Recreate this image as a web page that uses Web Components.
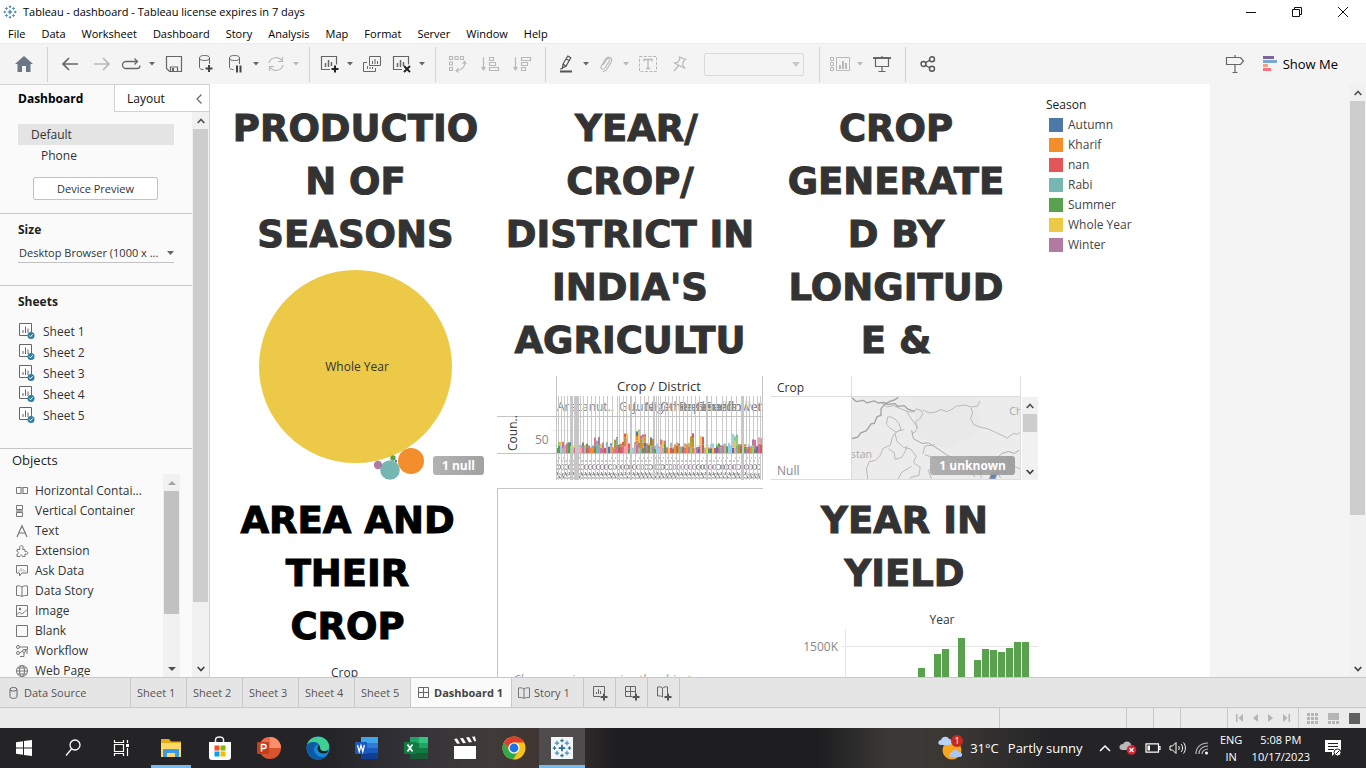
<!DOCTYPE html>
<html lang="en">
<head>
<meta charset="utf-8">
<title>Tableau - dashboard</title>
<style>
html,body{height:100%}
body{margin:0;font:11px/16px "Open Sans","Noto Sans",sans-serif;color:#111;overflow:hidden}
</style>
</head>
<body>
<tableau-app></tableau-app>
<script>
function define(name, css, html, setup){
  customElements.define(name, class extends HTMLElement{
    connectedCallback(){
      if(this.shadowRoot) return;
      const root=this.attachShadow({mode:'open'});
      const t=document.createElement('template');
      t.innerHTML='<style>*{box-sizing:border-box}button,select{font:inherit;color:inherit;margin:0}'+css+'</style>'+(typeof html==='function'?html(this):html);
      root.append(t.content.cloneNode(true));
      if(setup) setup(this,root);
    }
  });
}

/* ---------- icons: [width, height, markup] ---------- */
const mark=(s,c)=>{
  const p=(x,y,r,col)=>`<path d="M${x-r} ${y}H${x+r}M${x} ${y-r}V${y+r}" stroke="${col}" stroke-width="${r>2?1.4:1}"/>`;
  return [s,s,`<g transform="scale(${s/16})">${p(8,8,2.6,c||'#1f77a8')}${p(4,4,1.8,'#4a90b8')}${p(12,4,1.8,'#4a90b8')}${p(4,12,1.8,'#4a90b8')}${p(12,12,1.8,'#4a90b8')}${p(8,2,1.4,'#2f6f94')}${p(8,14,1.4,'#2f6f94')}${p(2,8,1.4,'#2f6f94')}${p(14,8,1.4,'#2f6f94')}</g>`];
};
const g='#666', l='#b8b8b8';
const plus=(x,y,c='#444')=>`<path d="M${x-3.5} ${y}h7M${x} ${y-3.5}v7" stroke="${c}" stroke-width="2" fill="none"/>`;
const ICONS={
 logo:mark(14),
 min:[10,10,'<path d="M0 5.5h10" stroke="#111"/>'],
 restore:[10,10,'<path d="M.5 2.5h7v7h-7zM2.5 2.5v-2h7v7h-2" stroke="#111" fill="none"/>'],
 close:[10,10,'<path d="M0 0l10 10M10 0L0 10" stroke="#111"/>'],
 home:[18,16,'<path d="M9 0L18 8H15.500V16H11V10H7V16H2.500V8H0z" fill="#6b7785"/>'],
 back:[16,14,`<path d="M16 7H1M7 1L1 7l6 6" stroke="${g}" stroke-width="1.700" fill="none"/>`],
 fwd:[16,14,`<path d="M0 7h15M9 1l6 6-6 6" stroke="${l}" stroke-width="1.700" fill="none"/>`],
 redo:[20,12,`<path d="M6 3.500H4a3 3 0 0 0 0 7h11a3 3 0 0 0 3-3M6 3.500h9M12.500 .5l3 3-3 3" stroke="${g}" stroke-width="1.300" fill="none"/>`],
 save:[16,16,`<path d="M.5 .5h15v15H3.500l-3-3zM4.500 15v-4h7v4" stroke="${g}" fill="none" stroke-width="1.200"/><path d="M6 12h2v3H6z" fill="${g}"/>`],
 dbadd:[16,18,`<path d="M1.500 3v9.500c0 1 1.500 2 4 2.200M11.500 3v6" stroke="${g}" fill="none"/><ellipse cx="6.500" cy="3" rx="5" ry="2.500" stroke="${g}" fill="none"/>${plus(11,13.5)}`],
 dbpause:[16,18,`<path d="M1.500 3v9.500c0 1 1.500 2 4 2.200M11.500 3v6" stroke="${g}" fill="none"/><ellipse cx="6.500" cy="3" rx="5" ry="2.500" stroke="${g}" fill="none"/><path d="M8 10.500h2v7H8zM11.500 10.500h2v7h-2z" fill="#444"/>`],
 refresh:[18,16,`<path d="M2 7a7 6.500 0 0 1 13-2M16 9a7 6.500 0 0 1-13 2M15.500 1v4.500H11M2.500 15v-4.500H7" stroke="${l}" stroke-width="1.200" fill="none"/>`],
 sheetadd:[20,18,`<path d="M10 14.500H1.500V1.500h15v8" stroke="${g}" fill="none" stroke-width="1.200"/><path d="M5.500 12V8M8.500 12V5M11.500 11V7" stroke="${g}" stroke-width="1.500"/>${plus(15,14,'#222')}`],
 dup:[18,16,`<path d="M6.500 .5h11v9h-11zM4 6.500H.5v9h12V12" stroke="${g}" fill="none"/><path d="M9.500 8V5M12 8V3M14.500 8V5M4.500 13v-3M7 13v-2M9.500 13v-2" stroke="${g}"/>`],
 clear:[20,18,`<path d="M10 14.500H1.500V1.500h15v8" stroke="${g}" fill="none" stroke-width="1.200"/><path d="M5.500 12V8M8.500 12V5M11.500 11V7" stroke="${g}" stroke-width="1.500"/><path d="M12 11l6 6M18 11l-6 6" stroke="#222" stroke-width="2"/>`],
 swap:[18,18,`<path d="M.5 1.500h3v3h-3zM6 1.500h3v3H6zM11.500 1.500h3v3h-3zM.5 7h3v3h-3zM.5 12.500h3v3h-3zM15.500 7c1 4-2 8-8 8.500M13.500 9l2-2.500L17.500 9M9.500 13.500L7 15.500l2.500 2" stroke="${l}" fill="none" stroke-width="1.100"/>`],
 asc:[18,16,`<path d="M2.500 1v12M8.500 1.500h4v3h-4zM8.500 6.500h6v3h-6zM8.500 11.500h9v3h-9z" stroke="${l}" fill="none" stroke-width="1.200"/><path d="M0 11h5l-2.500 4z" fill="${l}"/>`],
 desc:[18,16,`<path d="M2.500 1v12M8.500 1.500h9v3h-9zM8.500 6.500h6v3h-6zM8.500 11.500h4v3h-4z" stroke="${l}" fill="none" stroke-width="1.200"/><path d="M0 11h5l-2.500 4z" fill="${l}"/>`],
 pen:[14,18,'<path d="M4 9L8.800 1l3 1.800L7 11.200l-3.500 1.600zM4 9l3 2.200M7.300 4l2.800 1.600M1 14l3-.5" stroke="#555" stroke-width="1.200" fill="none"/><path d="M1 15.500h12v2H1z" fill="#555"/>'],
 clip:[14,16,`<path d="M4 9l4-6c1-1.500 3.500 0 2.500 1.800L6 12c-2 2.500-5 .5-3.700-2L7 2.500C9-.5 14 2 12.500 5.500L8 13c-1.500 2.500-4 2.500-4 2" stroke="${l}" stroke-width="1.100" fill="none"/>`],
 textbox:[18,16,`<path d="M.5 .5h17v15H.5z" stroke="${l}" stroke-dasharray="3 1.500" fill="none"/><path d="M5 5.500v-2h8v2M9 3.500v9M7 12.500h4" stroke="${l}" stroke-width="1.300" fill="none"/>`],
 pin:[14,16,`<path d="M6.500 1l6 2.500-2 1.500-.8 4 1.800 3-5-2.200L1.500 7l3.300-.8L6.800 3zM5.500 9.500L1 15" stroke="${l}" stroke-width="1.200" fill="none"/>`],
 cards:[20,14,`<path d="M.5 .5h3v3h-3zM.5 5.500h3v3h-3zM.5 10.500h3v3h-3zM6.500 .5h13v13h-13z" stroke="${l}" fill="none"/><path d="M9 8h2v4H9zM12 4h2v8h-2zM15 6h2v6h-2z" fill="${l}"/>`],
 present:[18,16,`<path d="M0 2h18" stroke="${g}" stroke-width="2"/><path d="M2.500 2v8.500h13V2M9 0v2M9 10.500v5M5.500 15.500h7" stroke="${g}" stroke-width="1.200" fill="none"/>`],
 share:[16,16,'<path d="M5 7l5-3M5 9l5 3" stroke="#555" stroke-width="1.400"/><g stroke="#555" stroke-width="1.400" fill="none"><circle cx="3.500" cy="8" r="2.500"/><circle cx="12" cy="3.200" r="2.500"/><circle cx="12" cy="12.800" r="2.500"/></g>'],
 guide:[18,18,`<path d="M9 0v2.500M.5 2.500h14L17.500 6l-3 3.500H.5zM9 9.500v8M6.500 17.500h5" stroke="${g}" stroke-width="1.200" fill="none"/>`],
 showme:[14,16,'<path d="M0 0h11v3H0z" fill="#7b669b"/><path d="M0 4h14v3H0z" fill="#7ba6cf"/><path d="M0 8h5v3H0z" fill="#f2a477"/><path d="M0 12h8v3H0z" fill="#fb6f83"/>'],
 caret:[6,4,'<path d="M0 0h6L3 3.500z" fill="#666"/>'],
 caretl:[6,4,'<path d="M0 0h6L3 3.500z" fill="#b8b8b8"/>'],
 bigcaret:[8,5,'<path d="M0 0h8L4 5z" fill="#c8c8c8"/>'],
 selcaret:[7,4,'<path d="M0 0h7L3.500 4z" fill="#666"/>'],
 left:[6,10,'<path d="M5.500 .5L1 5l4.500 4.500" stroke="#666" stroke-width="1.200" fill="none"/>'],
 up:[8,6,'<path d="M.7 5L4 1.500 7.300 5" stroke="#555" stroke-width="1.800" fill="none"/>'],
 down:[8,6,'<path d="M.7 1L4 4.500 7.300 1" stroke="#444" stroke-width="1.800" fill="none"/>'],
 triup:[8,4,'<path d="M0 4h8L4 0z" fill="#a3a3a3"/>'],
 tridown:[8,4,'<path d="M0 0h8L4 4z" fill="#505050"/>'],
 sheet:[17,17,'<path d="M1.500 .5h12v12h-12z" stroke="#666" fill="#fff"/><path d="M5 10V7M7.500 10V3.500M10 10V5.500" stroke="#666"/><circle cx="13" cy="12.500" r="3.500" fill="#2e7fa5"/><path d="M11.300 12.500l1.200 1.300 2.200-2.500" stroke="#fff" fill="none"/>'],
 horiz:[12,12,'<path d="M.5 2.500h4.500v6H.5zM7 2.500h4.500v6H7z" stroke="#777" fill="none"/><path d="M5 2h2v7H5z" fill="#aaa"/>'],
 vert:[12,12,'<path d="M.5 .5h6v4h-6zM.5 7.500h6v4h-6z" stroke="#777" fill="none"/><path d="M0 5h7v2H0z" fill="#aaa"/>'],
 text:[12,12,'<path d="M1 12L6 .8 11 12M2.800 8h6.400" stroke="#777" stroke-width="1.200" fill="none"/>'],
 ext:[12,12,'<path d="M1 4.500h3c-1-2 0-4 1.500-4s2 2 1.200 4H9v2.200c2-.6 2.800.2 2.800 1.300S11 9.500 9 9v2.500H6.500c0-2-2.500-2-2.500 0H1V9c2 0 2-2.500 0-2.500z" stroke="#777" fill="none"/>'],
 ask:[12,12,'<path d="M.5 .5h11v7.500H6l-2.500 3v-3h-3z" stroke="#777" fill="none"/><path d="M3 6.500V5M5 6.500V3M7 6.500V4M9 6.500V5" stroke="#aaa"/>'],
 story:[12,12,'<path d="M6 2C4.500 .8 2.500 .6 .5 1v9.500c2-.2 4 0 5.500 1 1.500-1 3.500-1.200 5.500-1V1C9.500 .6 7.500 .8 6 2zM6 2v9.500" stroke="#777" fill="none"/>'],
 image:[12,12,'<path d="M.5 .5h11v11H.5zM.5 10l3-3 2 2 2.500-1.500 3-3" stroke="#777" fill="none"/><circle cx="4" cy="4" r="1.200" fill="#777"/>'],
 blank:[12,12,'<path d="M.5 .5h11v11H.5z" stroke="#777" fill="none"/>'],
 flow:[12,12,'<g stroke="#777" fill="none"><circle cx="2" cy="2" r="1.500"/><circle cx="2" cy="8" r="1.500"/><circle cx="8" cy="6" r="1.500"/><path d="M4 2h7.500v2.500H9M3.500 8L6.500 6M8 8v3.500H4M10 8h2M9.500 6H12"/></g>'],
 web:[12,12,'<g stroke="#777" fill="none"><circle cx="6" cy="6" r="5.500"/><ellipse cx="6" cy="6" rx="2.500" ry="5.500"/><path d="M.5 6h11M1.500 3h9M1.500 9h9"/></g>'],
 db:[9,12,'<path d="M1 2.500v7c0 2.500 7 2.500 7 0v-7" stroke="#666" fill="none"/><ellipse cx="4.500" cy="2.300" rx="3.500" ry="1.800" stroke="#666" fill="none"/>'],
 dash:[12,12,'<path d="M.5 .5h10v10H.5zM5.500 .5v10M.5 5.500h10" stroke="#666" fill="none"/>'],
 tabsheet:[16,16,`<path d="M8 11.500H1.500v-10h11v7" stroke="#666" fill="none"/><path d="M4.500 9V7M6.500 9V4M8.500 9V6" stroke="#666"/>${plus(12,12,'#555')}`],
 tabdash:[16,16,`<path d="M8 11.500H1.500v-10h10v7M6.500 1.500v10M1.500 6.500h10" stroke="#666" fill="none"/>${plus(12,12,'#555')}`],
 tabstory:[16,16,`<path d="M6.500 3C5 1.800 3 1.600 1.500 2v9c2-.3 4 0 5 1V3c1.500-1.200 3.500-1.400 5-1v6" stroke="#666" fill="none"/>${plus(12,12,'#555')}`],
 first:[7,8,'<path d="M0 0h1.500v8H0zM7 0v8L2.500 4z" fill="#b5b5b5"/>'],
 prev:[5,8,'<path d="M5 0v8L0 4z" fill="#b5b5b5"/>'],
 next:[5,8,'<path d="M0 0v8l5-4z" fill="#b5b5b5"/>'],
 last:[7,8,'<path d="M5.500 0H7v8H5.500zM0 0v8l4.500-4z" fill="#b5b5b5"/>'],
 grid9:[11,11,'<path d="M0 0h3v3H0zM4 0h3v3H4zM8 0h3v3H8zM0 4h3v3H0zM4 4h3v3H4zM8 4h3v3H8zM0 8h3v3H0zM4 8h3v3H4zM8 8h3v3H8z" fill="#b5b5b5"/>'],
 film:[11,11,'<path d="M0 0h11v7H0zM0 8h3v3H0zM4 8h3v3H4zM8 8h3v3H8z" fill="#b5b5b5"/>'],
 full:[11,11,'<path d="M0 0h11v11H0z" fill="#606060"/>'],
 win:[16,16,'<path d="M0 2.200L7 1.200V7.500H0zM8 1L16 0V7.500H8zM0 8.500h7v6.300L0 13.800zM8 8.500h8V16L8 15z" fill="#fff"/>'],
 search:[16,18,'<circle cx="10" cy="6" r="5" stroke="#fff" stroke-width="1.300" fill="none"/><path d="M6.500 10L1 16.500" stroke="#fff" stroke-width="1.300"/>'],
 task:[18,16,'<path d="M1.500 4.500h9v7h-9zM1.500 0v2.500h9V0M1.500 16v-2.500h9V16M14.500 0v3M14.500 8v8" stroke="#fff" fill="none" stroke-width="1.200"/><path d="M13 4h3v3h-3z" fill="#fff"/>'],
 folder:[22,20,'<path d="M1 1h8l2 2.500h10V19H1z" fill="#e8a917"/><path d="M1 5h20v14H1z" fill="#ffd968"/><path d="M3 19v-8h16v8h-4v-4H7v4z" fill="#3c9be4"/>'],
 store:[24,24,'<path d="M7.500 7V4c0-4 8-4 8 0v3" stroke="#eee" stroke-width="1.500" fill="none"/><path d="M1 6h22v15a3 3 0 0 1-3 3H4a3 3 0 0 1-3-3z" fill="#fff"/><path d="M6.500 9.500h5v5h-5z" fill="#f25022"/><path d="M12.500 9.500h5v5h-5z" fill="#7fba00"/><path d="M6.500 15.500h5v5h-5z" fill="#00a4ef"/><path d="M12.500 15.500h5v5h-5z" fill="#ffb900"/>'],
 ppt:[24,24,'<circle cx="13" cy="12" r="11" fill="#d9532c"/><path d="M13 1a11 11 0 0 1 11 11H13z" fill="#ff8f6b"/><path d="M2 12a11 11 0 0 1 11-11v11z" fill="#ed6c47"/><rect y="6" width="12" height="12" rx="1" fill="#c43e1c"/><path d="M4.500 15.500V8.500h2.500a2 2 0 0 1 0 4H4.500" stroke="#fff" stroke-width="1.600" fill="none"/>'],
 edge:[24,24,'<circle cx="12" cy="12" r="11.500" fill="#1389d8"/><path d="M1 9C3 0 16-2 21 5c4 5 2 11-4 10-4 0-2-2-3-5C12 5 4 5 1 9z" fill="#3fcf8e"/><path d="M1 9c3-4 10-4 12 0-5-1-6 5-4 8 3 5 9 5 12 2-3 6-14 7-19-2-1-2-1.500-5-1-8z" fill="#0c59a4"/><path d="M13 9c-2 2-2 5 0 7 3 2 6 2 9 0 1-2-1-1-5-1-4-1-2-3-4-6z" fill="#202022"/>'],
 word:[24,24,'<path d="M6 1h17v6H6z" fill="#41a5ee"/><path d="M6 7h17v5H6z" fill="#2b7cd3"/><path d="M6 12h17v5H6z" fill="#185abd"/><path d="M6 17h17v6H6z" fill="#103f91"/><rect y="6" width="12" height="12" rx="1" fill="#185abd"/><path d="M2.500 9l1.700 6.500L6 9.500l1.800 6L9.500 9" stroke="#fff" stroke-width="1.300" fill="none"/>'],
 excel:[24,24,'<path d="M6 1h9v6H6z" fill="#21a366"/><path d="M15 1h9v6h-9z" fill="#33c481"/><path d="M6 7h9v10H6z" fill="#107c41"/><path d="M15 7h9v5h-9z" fill="#21a366"/><path d="M15 12h9v5h-9z" fill="#107c41"/><path d="M6 17h18v6H6z" fill="#185c37"/><rect y="6" width="12" height="12" rx="1" fill="#107c41"/><path d="M3.500 8.500l5 7M8.500 8.500l-5 7" stroke="#fff" stroke-width="1.700"/>'],
 clap:[24,24,'<path d="M1 10h22v13H1z" fill="#fff"/><path d="M1 3l3-.5 3 5-3 .3zM7 2.200l3-.3 3 5-3 .3zM13 1.500l3-.4 3 5-3 .3zM19 .8l3-.3 1 4.500-1.500.5z" fill="#fff"/>'],
 chrome:[24,24,'<circle cx="12" cy="12" r="11.500" fill="#fbc116"/><path d="M2 6.300A11.500 11.500 0 0 1 22 6.500H12a5.500 5.500 0 0 0-5 8z" fill="#e33b2e"/><path d="M2 6.300A11.500 11.500 0 0 0 11 23.500L16.500 15a5.500 5.500 0 0 1-9.500-.5z" fill="#2da94f"/><circle cx="12" cy="12" r="5.600" fill="#fff"/><circle cx="12" cy="12" r="4.400" fill="#1a73e8"/>'],
 tableau:[22,22,`<path d="M0 0h22v22H0z" fill="#f4f7fa"/><g transform="translate(1 1)">${mark(20,'#2b6b95')[2]}</g>`],
 weather:[26,24,'<circle cx="14" cy="14" r="9.500" fill="#f8a51d"/><path d="M3 9c-4 0-3-5 0-5 1-4 7-4 8-1 4 0 4 6 0 6z" fill="#b9d2f4"/><path d="M14 21c-4 0-3-4 0-5 1-3 6-3 7 0 4 0 4 5 1 5z" fill="#a9c8f2"/>'],
 chev:[12,8,'<path d="M1 7l5-5 5 5" stroke="#fff" stroke-width="1.500" fill="none"/>'],
 cloud:[18,14,'<path d="M3 9c-4-1-3-6 1-6 2-4 8-3 8 1 3 0 4 4 1 5z" fill="#b9b9b9"/><circle cx="12.500" cy="9" r="4.800" fill="#d9232e"/><path d="M10.500 7l4 4M14.500 7l-4 4" stroke="#fff" stroke-width="1.300"/>'],
 batt:[16,10,'<path d="M1 .8h12.500v8.400H1zM13.500 3.500H15v3h-1.500" stroke="#fff" stroke-width="1.200" fill="none"/><path d="M2.500 2.500H5v5H2.500z" fill="#fff"/>'],
 vol:[18,14,'<path d="M1 5h2.500L7 1.500v11L3.500 9H1zM9.500 5c1 1 1 3 0 4M12 3c2 2 2 6 0 8M14.500 1.500c2.500 3 2.500 8 0 11" stroke="#fff" fill="none"/>'],
 wifi:[14,13,'<path d="M1 12C1 5 6 1 13 1M4 12C4 7 8 4 13 4M7 12c0-3 3-5 6-5" stroke="#bbb" fill="none" stroke-width="1.200"/><circle cx="11.500" cy="11" r="1.500" fill="#fff"/>'],
 note:[18,17,'<path d="M1 0h16v12h-5l-4 4v-4H1z" fill="#fff"/><path d="M4 3.500h10M4 6.500h10M4 9.500h6" stroke="#222"/><circle cx="13.500" cy="12.500" r="3.500" fill="#fff" stroke="#222"/><path d="M11.500 14.500l4-4" stroke="#222"/>'],
};
define('tb-icon',':host{display:block;flex:none;line-height:0}svg{display:block;overflow:visible}',el=>{
  const [w,h,m]=ICONS[el.getAttribute('name')];
  return `<svg width="${w}" height="${h}" viewBox="0 0 ${w} ${h}" fill="none" aria-hidden="true">${m}</svg>`;
});

/* ---------- scroll bar: thumb length as a share of its track ---------- */
define('tb-scrollbar',`:host{display:flex;flex-direction:column;flex:none;width:17px;background:#f1f1f1}
.a{height:17px;display:grid;place-items:center;flex:none}.t{flex:1;padding:0 1px}.th{background:#cdcdcd}`,
el=>{const k=el.hasAttribute('tri');return `<div class="a"><tb-icon name="${k?'triup':'up'}"></tb-icon></div><div class="t"><div class="th" style="height:${el.getAttribute('thumb')};${k?'background:#c1c1c1':''}"></div></div><div class="a"><tb-icon name="${k?'tridown':'down'}"></tb-icon></div>`;});

/* ---------- window chrome ---------- */
define('title-bar',`:host{display:flex;align-items:center;height:23px;padding-left:3px;background:#fff;color:#000}
h1{font:inherit;margin:0 auto 0 6px}button{width:46px;height:20px;padding:0;border:0;background:none;display:grid;place-items:center}`,
`<tb-icon name="logo"></tb-icon><h1>Tableau - dashboard - Tableau license expires in 7 days</h1>
<button aria-label="Minimize"><tb-icon name="min"></tb-icon></button><button aria-label="Restore"><tb-icon name="restore"></tb-icon></button><button aria-label="Close"><tb-icon name="close"></tb-icon></button>`);

define('menu-bar',`:host{display:block;background:#fff}nav{display:flex;align-items:center;gap:16px;height:20px;padding:2px 0 0 8px}
button{border:0;padding:0;background:none;color:#000}`,
'<nav>'+['File','Data','Worksheet','Dashboard','Story','Analysis','Map','Format','Server','Window','Help'].map(t=>`<button>${t}</button>`).join('')+'</nav>');

define('tool-button',`:host{display:flex}button{border:0;background:none;padding:0;height:40px;display:grid;place-items:center;width:32px}
:host([menu]) button{width:28px}:host([menu]) button+button{width:12px}`,
el=>`<button aria-label="${el.getAttribute('label')}"><tb-icon name="${el.getAttribute('icon')}"></tb-icon></button>`+
 (el.hasAttribute('menu')?`<button aria-label="${el.getAttribute('label')} options"><tb-icon name="${el.getAttribute('menu')||'caret'}"></tb-icon></button>`:''));

const tool=(icon,label,menu)=>`<tool-button icon="${icon}" label="${label}"${menu!==undefined?` menu="${menu}"`:''}></tool-button>`;
define('tool-bar',`:host{display:flex;align-items:center;height:41px;padding:0 28px 0 8px;background:#f4f4f4;border-top:1px solid #ececec}
i{width:1px;height:35px;background:#d2d2d2;margin:0 6px 0 7px;flex:none}
.pick{position:relative;margin:0 8px;width:100px;height:23px}select{width:100%;height:100%;appearance:none;border:1px solid #d0d0d0;border-radius:2px;background:#f4f4f4}
.pick tb-icon{position:absolute;right:4px;top:9px;pointer-events:none}
.show{display:flex;align-items:center;gap:6px;border:0;background:none;padding:0;font-size:13px;color:#000;margin-left:12px}.sp{margin-left:auto}`,
tool('home','Start page')+'<i></i>'+tool('back','Undo')+tool('fwd','Redo')+tool('redo','Replay','caret')+tool('save','Save')+tool('dbadd','New data source')+tool('dbpause','Pause updates','caret')+tool('refresh','Refresh','caretl')+'<i></i>'+
tool('sheetadd','New worksheet','caret')+tool('dup','Duplicate')+tool('clear','Clear','caret')+'<i></i>'+tool('swap','Swap')+tool('asc','Sort ascending')+tool('desc','Sort descending')+'<i></i>'+
tool('pen','Highlight','caret')+tool('clip','Group','caretl')+tool('textbox','Labels')+tool('pin','Fix axes')+
'<div class="pick"><select aria-label="Fit" disabled></select><tb-icon name="bigcaret"></tb-icon></div><i></i>'+tool('cards','Cards','caretl')+tool('present','Presentation')+'<i></i>'+tool('share','Share')+
'<div class="sp"></div>'+tool('guide','Data guide')+'<button class="show"><tb-icon name="showme"></tb-icon>Show Me</button>');

/* ---------- side pane ---------- */
define('side-section',`:host{display:block;border-bottom:1px solid #c6c6c6;padding:8px 18px}h2{font:700 12px/16px "Open Sans",sans-serif;margin:0;color:#222}`,
el=>`${el.getAttribute('heading')?`<h2>${el.getAttribute('heading')}</h2>`:''}<slot></slot>`);
define('side-item',`:host{display:block}button{display:flex;align-items:center;width:100%;border:0;background:none;padding:0;color:#333;font-size:12px;height:var(--h,21px);text-align:left;white-space:nowrap;gap:var(--gap,8px)}`,
el=>`<button><tb-icon name="${el.getAttribute('icon')}"></tb-icon><slot></slot></button>`);
define('side-pane',`:host{display:flex;flex-direction:column;width:210px;flex:none;background:#fafafa;border-right:1px solid #d2d2d2;border-top:1px solid #d2d2d2;min-height:0}
.tabs{display:flex;height:27px;flex:none}.tabs button{border:0;background:none;font-size:12px;padding:0;text-align:left}
.on{font-weight:700!important;width:114px;padding-left:18px!important;color:#000}.lay{flex:1;display:flex;align-items:center;border-left:1px solid #d2d2d2;border-bottom:1px solid #d2d2d2;background:#fff;padding:1px 7px 0 12px}
.lay .t{margin-right:auto;color:#111}
.body{display:flex;flex:1;min-height:0}.col{flex:1;min-width:0;overflow:hidden;display:flex;flex-direction:column}
.dev{display:block;width:156px;height:21px;border:0;padding:0 0 0 13px;text-align:left;background:none;font-size:12px;color:#333}.dev.s{background:#e4e4e4}.dev.p{padding-left:23px}
.prev{display:block;width:125px;height:23px;border:1px solid #c2c2c2;border-radius:2px;background:#fff;color:#333;margin:11px 0 5px 15px;padding:0}
.pick{position:relative;width:156px;margin:5px 0 14px;border-bottom:1px solid #c2c2c2}select{display:block;width:100%;height:19px;appearance:none;border:0;background:none;color:#333;padding:0 0 0 1px}
.pick tb-icon{position:absolute;right:0;top:8px;pointer-events:none}
.sheets{margin:11px 0 14px}
h3{font:500 13px/17px "Open Sans",sans-serif;color:#222;margin:3px 0 5px 12px}
.obj{display:flex;flex:1;min-height:0}.list{--h:20px;--gap:7px;padding:7px 0 0 16px;overflow:hidden;width:163px}.sec1{padding-top:4px}`,
`<div class="tabs"><button class="on">Dashboard</button><div class="lay"><button class="t">Layout</button><button aria-label="Collapse"><tb-icon name="left"></tb-icon></button></div></div>
<div class="body"><div class="col">
<side-section><div class="sec1"><button class="dev s">Default</button><button class="dev p">Phone</button><button class="prev">Device Preview</button></div></side-section>
<side-section heading="Size"><div class="pick"><select aria-label="Size"><option>Desktop Browser (1000 x ...</option></select><tb-icon name="selcaret"></tb-icon></div></side-section>
<side-section heading="Sheets"><div class="sheets">${[1,2,3,4,5].map(n=>`<side-item icon="sheet">Sheet ${n}</side-item>`).join('')}</div></side-section>
<h3>Objects</h3><div class="obj"><div class="list">${[['horiz','Horizontal Contai...'],['vert','Vertical Container'],['text','Text'],['ext','Extension'],['ask','Ask Data'],['story','Data Story'],['image','Image'],['blank','Blank'],['flow','Workflow'],['web','Web Page']].map(([i,t])=>`<side-item icon="${i}">${t}</side-item>`).join('')}</div><tb-scrollbar tri thumb="73%"></tb-scrollbar></div>
</div><tb-scrollbar thumb="89%"></tb-scrollbar></div>`);

/* ---------- dashboard zones ---------- */
define('zone-title',`:host{display:block}h2{font:700 37px/53px "DejaVu Sans","Liberation Sans",sans-serif;-webkit-text-stroke:1px var(--title,#333);color:var(--title,#333);margin:0;text-align:center;white-space:nowrap}`,'<h2><slot></slot></h2>');
define('null-badge',`:host{display:block}button{border:0;border-radius:3px;background:linear-gradient(90deg,#aaaaaae6,#989898e6);color:#fff;font-weight:700;font-size:12px;height:19px;padding:0 9px;display:block}`,'<button><slot></slot></button>');

define('bubble-chart',`:host{display:block;position:relative}svg{display:block;margin:0 auto}text{font:12px "Open Sans",sans-serif;fill:#333}null-badge{position:absolute;right:5px;bottom:5px}`,
`<svg width="271" height="219"><g transform="translate(0 -1)"><circle cx="137.500" cy="106.500" r="96.500" fill="#edc948"/><circle cx="193" cy="201" r="13" fill="#f28e2b"/><circle cx="172" cy="210" r="9.800" fill="#76b7b2"/><circle cx="160" cy="205" r="4.200" fill="#b07aa1"/><circle cx="175" cy="198" r="2.700" fill="#59a14f"/><circle cx="178" cy="201" r="1.200" fill="#4e79a7"/><text x="139" y="111" text-anchor="middle">Whole Year</text></g></svg><null-badge>1 null</null-badge>`);

define('district-chart',':host{display:block}svg{display:block;width:100%;height:104px}text{font:12px "Open Sans",sans-serif;fill:#888}.d{fill:#333}',
()=>{
  let seed=7; const rnd=()=>(seed=(seed*16807)%2147483647)/2147483647;
  const pal=['#4e79a7','#f28e2b','#e15759','#76b7b2','#59a14f','#edc948','#b07aa1','#ff9da7','#9c755f','#bab0ac','#8cd17d','#a0cbe8','#d37295','#b6992d'];
  let s='<path d="M54 54.500H266M54 69.500H266" stroke="#eee"/>', bars='';
  const peaks=[[4,14],[11,12],[40,16],[59,17],[69,20],[81,24],[86,19],[95,18],[106,16],[135,20],[145,20],[178,20],[197,16],[203,17]];
  for(let x=0;x<206;x+=2){
    let h=5+rnd()*6; for(const [p,v] of peaks) if(Math.abs(x-p)<3) h=Math.max(h,v-rnd()*4);
    for(let y=0;y<h;){ const k=Math.min(h-y,4+rnd()*6); bars+=`<rect x="${59+x}" y="${77-y-k}" width="2" height="${k}" fill="${pal[Math.floor(rnd()*14)]}"/>`; y+=k; }
  }
  for(const [x,t] of [[60,'Arecanut..'],[122,'Gu..'],[136,'Jute'],[148,'Niger seed'],[163,'Other Cereals'],[182,'Rapeseed'],[200,'Small millets'],[209,'Sunflower']])
    s+=`<text x="${x}" y="35" clip-path="url(#cut)">${t}</text>`;
  for(let x=0;x<204;x+=4){
    s+=`<path d="M${60+x} 85h2M${62+x} 82h1M${60+x} 99q2-3 4 0M${59+x} 102h4" stroke="#999" fill="none"/><ellipse cx="${61.5+x}" cy="91" rx="${1.5+rnd()}" ry="2.500" stroke="${rnd()>.4?'#888':'#a88ca4'}" fill="none"/><path d="M${60+x} 96l3 6" stroke="#777"/>`;
  }
  const lines=[2,5,8,11,14,18,24,27,31,35,39,43,47,51,56,61,63,67,70,79,84,88,92,97,98,100,102,104,109,112,116,120,123,127,131,135,139,143,150,151,155,160,166,170,175,180,185,190,193,197,201,204];
  for(const x of lines) s+=`<path d="M${59.5+x} 20V104" stroke="#c9c9c9"/>`;
  s+=bars+'<path d="M80 20V104" stroke="#c6c6c6" stroke-width="4"/><path d="M75 20V104M134 20V104M246 20V104" stroke="#c6c6c6" stroke-width="2"/>';
  s+='<path d="M59.500 0V104M265.500 0V104M0 40.500H266M0 77.500H266" stroke="#c4c4c4"/>';
  return `<svg><defs><clipPath id="cut"><path d="M59 20h206v20H59z"/></clipPath></defs>${s}<text class="d" x="162" y="15" text-anchor="middle" style="font-size:13px">Crop / District</text><text x="38" y="68">50</text><text class="d" transform="translate(20 75) rotate(-90)">Coun..</text></svg>`;
});

define('crop-map',`:host{display:grid;grid-template-columns:80px 1fr 17px;grid-template-rows:21px 83px;height:104px;color:#333;font-size:12px;position:relative}
.h{border-bottom:1px solid #ddd;padding:4px 6px 0}.h2{border-bottom:1px solid #ddd;border-left:1px solid #ddd;border-right:1px solid #ddd}
.n{display:flex;align-items:flex-end;padding:0 6px;color:#888;border-bottom:1px solid #ddd}.m{position:relative;background:#ebebeb;border:solid #ddd;border-width:0 1px 1px;overflow:hidden}
svg{display:block;width:100%;height:100%}null-badge{position:absolute;right:5px;bottom:4px}tb-scrollbar{margin-left:1px;width:16px}text{font:32px "Open Sans",sans-serif;fill:#aaa}`,
`<div class="h">Crop</div><div class="h2"></div><div></div><div class="n">Null</div>
<div class="m"><svg viewBox="260 80 507 247" preserveAspectRatio="xMidYMin slice" fill="none" stroke="#b8b8b8" stroke-width="3" stroke-linejoin="round">
<path d="M260 80h507v247H260z" fill="#ececec" stroke="none"/><path d="M440 80h200l10 100-100 60-90-40z" fill="#e9e9e9" stroke="none"/>
<path d="M260 205l18-4 8-12 18-8 14-20 10-2 8-20 12-4 0-20 10-12 16-10 14-4 12-8M260 82l14 12 20-4 12 8 22-6 12 6 18-2 8 6 24-2 8 8 20-2 10 10 22 8" stroke="#a2a2a2" stroke-width="4"/>
<path d="M350 98l16 12 20-4 18 8 20 8 18 4 12-10 14 4 6 12-10 14-12 8 4 20-4 10-10 6"/>
<path d="M368 140l-4 22 14 14 16 10 14-8-6-18-12-14-14-6zM424 122l10 16 14 20 12 16"/>
<path d="M440 180l6 26 26 14 18-2 20 12 18 12 20 14 26 10 28 12 22-2 24 10 18-16 24 2 22-22 20-6 18 6 14-10" stroke="#a8a8a8"/>
<path d="M474 120l20 8 16-2 18-8 18 6 14-6 14-10 28-4 16 6 20-2 8-16M618 112l6 16-6 16 8 18 18 8 26 6 26 12 22 10 10 6 18-14 14 2 16-16"/>
<path d="M308 327l-4-30 8-22 20-4 14-16 8-20 22-10 6-24 8-12 12-8 14-2M390 190l6 24 20 18 20 4 18 22-8 20 20 14-4 24-24 6-12 14M370 236l18 12 2 20 20-6 12-20 4-16M474 252l6-24 30-4M480 254l40 14 30 14 46 6M596 288l20 16 16 18M640 270l6 20 4 34M700 270l-4 30 12 24M730 260l6 24 30 12M400 327l10-20 30-18M500 327l-10-26 20-10"/>
<path d="M674 327l6-17 20-4-8 21z" fill="#5b84b8" stroke="#aaa"/>
<text x="257" y="264" stroke="none">stan</text><text x="734" y="133" stroke="none">Ch</text></svg><null-badge>1 unknown</null-badge></div><tb-scrollbar thumb="36%"></tb-scrollbar>`);

define('yield-chart',':host{display:block}svg{display:block;width:100%;height:80px}text{font:12px "Open Sans",sans-serif;fill:#888}',
()=>'<svg><path d="M70.500 46.500H267M74.500 29.500V80" stroke="#e6e6e6"/><text x="171" y="24" text-anchor="middle" style="fill:#333">Year</text><text x="67" y="51" text-anchor="end">1500K</text>'+
[[147,68],[163,54],[171,49],[187,38],[203,60],[211,49],[219,50],[227,52],[235,48],[243,42],[251,42]].map(([x,y])=>`<rect x="${x}" y="${y}" width="7" height="${80-y}" fill="#59a14f"/>`).join('')+'</svg>');

define('season-legend',`:host{display:block;color:#444;font-size:12px}h3{font:12px/16px "Open Sans",sans-serif;color:#222;margin:5px 0 2px}ul{list-style:none;margin:0;padding:0 0 0 3px}li{display:flex;align-items:center;height:20px;gap:5px}i{width:14px;height:14px;background:var(--c)}`,
'<h3>Season</h3><ul>'+[['Autumn','#4e79a7'],['Kharif','#f28e2b'],['nan','#e15759'],['Rabi','#76b7b2'],['Summer','#59a14f'],['Whole Year','#edc948'],['Winter','#b07aa1']].map(([t,c])=>`<li><i style="--c:${c}"></i>${t}</li>`).join('')+'</ul>');

define('dash-canvas',`:host{display:flex;flex:1;min-width:0;min-height:0;background:#f4f4f4}
.page{flex:0 1 1000px;background:#fff;overflow:hidden;display:grid;grid-template-columns:271fr 266fr 267fr 156fr;grid-template-rows:388px 388px;gap:8px;padding:8px 8px 0}
.page>*{min-width:0}.z{padding-top:10px}.r2{padding-top:6px}.z district-chart,.z crop-map{margin-top:9px}
.indent{padding-left:4px}.narrow{margin-right:17px}.first{margin-right:12px;--title:#000}.cap{display:block;text-align:center;font-size:12px;margin:12px 6px 0 0;color:#333}
.ask{border:solid #c6c6c6;border-width:1px 0 0 1px;color:#9a9a9a;font-style:italic;font-size:12px;padding:183px 15px 0}
.ask p{margin:0;white-space:nowrap}.gap{flex:1}`,
`<div class="page">
<section class="z"><zone-title class="indent">PRODUCTIO<br>N OF<br>SEASONS</zone-title><bubble-chart></bubble-chart></section>
<section class="z"><zone-title>&nbsp;YEAR/<br>CROP/<br>DISTRICT IN<br>INDIA'S<br>AGRICULTU</zone-title><district-chart></district-chart></section>
<section class="z"><zone-title class="narrow">CROP<br>GENERATE<br>D BY<br>LONGITUD<br>E &amp;</zone-title><crop-map></crop-map></section>
<season-legend></season-legend>
<section class="r2"><div class="first"><zone-title>AREA AND<br>THEIR<br>CROP</zone-title><span class="cap">Crop</span></div></section>
<section class="ask"><p>Choose an image using the object</p></section>
<section class="r2"><zone-title>YEAR IN<br>YIELD</zone-title><yield-chart></yield-chart></section>
</div><div class="gap"></div><tb-scrollbar thumb="74%"></tb-scrollbar>`);

/* ---------- sheet tabs and status ---------- */
define('sheet-tabs',`:host{display:flex;height:31px;background:#e5e5e5;border:solid #c8c8c8;border-width:1px 0}
button{display:flex;align-items:center;gap:4px;border:0;border-right:1px solid #c8c8c8;background:none;color:#555;padding:0 11px 0 6px;height:29px;white-space:nowrap;width:56px}
.src{width:131px;padding-left:9px;gap:6px}.on{width:101px;background:#fafafa;color:#444;font-weight:700;padding:0 0 0 7px}.st{width:72px}.new{width:32px;padding:0;justify-content:center}`,
`<button class="src"><tb-icon name="db"></tb-icon>Data Source</button>${[1,2,3,4,5].map(n=>`<button>Sheet ${n}</button>`).join('')}<button class="on"><tb-icon name="dash"></tb-icon>Dashboard 1</button><button class="st"><tb-icon name="story"></tb-icon>Story 1</button><button class="new" aria-label="New worksheet"><tb-icon name="tabsheet"></tb-icon></button><button class="new" aria-label="New dashboard"><tb-icon name="tabdash"></tb-icon></button><button class="new" aria-label="New story"><tb-icon name="tabstory"></tb-icon></button>`);
define('status-bar',`:host{display:flex;justify-content:flex-end;height:20px;background:#ebebeb}
div{border-left:1px solid #c8c8c8;height:100%;display:flex;align-items:center;justify-content:space-around}button{border:0;background:none;padding:0}
.a{width:127px}.b{width:27px}.c{width:47px}.d{width:71px;padding:0 3px}.e{width:68px;padding:0 1px 0 3px}`,
`<div class="a"></div><div class="b"></div><div class="b"></div><div class="c"></div><div class="d">${['first','prev','next','last'].map(n=>`<button aria-label="${n}"><tb-icon name="${n}"></tb-icon></button>`).join('')}</div><div class="e">${['grid9','film','full'].map(n=>`<button aria-label="${n}"><tb-icon name="${n}"></tb-icon></button>`).join('')}</div>`);

define('task-bar',`:host{display:flex;height:40px;color:#fff;background:linear-gradient(90deg,#242427 0,#242427 24%,#36343a 31%,#403a38 36%,#3e3330 41%,#1e1e20 45%,#1e1e20 60%,#3b3936 65%,#3a3733 70%,#242427 77%)}
button{border:0;background:none;padding:0;color:#fff}.app{width:49px;height:40px;display:grid;place-items:center;border-bottom:3px solid transparent;padding-top:3px;background-clip:padding-box}
.start{width:48px}.run{width:40px;margin:0 4px 0 5px;border-color:#76b9ed}.act{width:46px;background:#4e4c4d;border-color:#76b9ed;margin-left:1px}
.tray{margin-left:auto;display:flex;align-items:center;font-size:11px}.tray>*{flex:none}
.w{display:flex;align-items:center;gap:7px;font-size:13px;margin-right:16px}.w span+span{margin-left:2px}.wi{position:relative}.wi b{position:absolute;right:1px;top:-1px;width:12px;height:12px;border-radius:50%;background:#c42b1c;font:9px/12px "Open Sans",sans-serif;text-align:center}.w .wi+span{margin-left:-1px}
.ic{display:flex;gap:8px;align-items:center}.two{text-align:center;line-height:17px}.lang{margin:0 9px 0 11px;width:23px}.note{margin:0 24px 0 14px}`,
`${[['win','Start','start'],['search','Search'],['task','Task view'],['folder','File Explorer','run'],['store','Store'],['ppt','PowerPoint'],['edge','Edge'],['word','Word'],['excel','Excel'],['clap','Movies'],['chrome','Chrome'],['tableau','Tableau','act']].map(([i,t,c])=>`<button class="app ${c||''}" aria-label="${t}"><tb-icon name="${i}"></tb-icon></button>`).join('')}
<div class="tray"><button class="w"><span class="wi"><tb-icon name="weather"></tb-icon><b>1</b></span><span>31°C</span><span>Partly sunny</span></button>
<div class="ic">${['chev','cloud','batt','vol','wifi'].map(n=>`<tb-icon name="${n}"></tb-icon>`).join('')}</div>
<div class="two lang">ENG<br>IN</div><div class="two">5:08 PM<br>10/17/2023</div><button class="note" aria-label="Notifications"><tb-icon name="note"></tb-icon></button></div>`);

define('tableau-app',`:host{display:flex;flex-direction:column;height:100vh}main{display:flex;flex:1;min-height:0}title-bar,menu-bar,tool-bar,sheet-tabs,status-bar,task-bar{flex:none}`,
`<title-bar></title-bar><menu-bar></menu-bar><tool-bar></tool-bar><main><side-pane></side-pane><dash-canvas></dash-canvas></main><sheet-tabs></sheet-tabs><status-bar></status-bar><task-bar></task-bar>`);
</script>
</body>
</html>
